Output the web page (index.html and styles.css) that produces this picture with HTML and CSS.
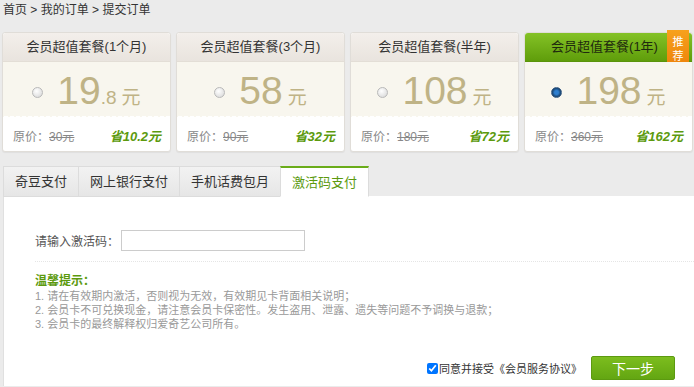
FILE: index.html
```html
<!DOCTYPE html>
<html lang="zh-CN">
<head>
  <meta charset="UTF-8">
  <title>提交订单</title>
  <link rel="stylesheet" href="styles.css">
</head>
<body>
  <div class="crumbs"><a>首页</a> &gt; <a>我的订单</a> &gt; <span>提交订单</span></div>

  <div class="plans">
    <div class="plan">
      <div class="plan-head">会员超值套餐(1个月)</div>
      <div class="plan-body">
        <span class="radio"></span>
        <span class="price">19</span><span class="price-small">.8</span><span class="unit">元</span>
      </div>
      <div class="plan-foot">
        <span class="orig">原价：<s>30元</s></span>
        <span class="save">省10.2元</span>
      </div>
    </div>
    <div class="plan">
      <div class="plan-head">会员超值套餐(3个月)</div>
      <div class="plan-body">
        <span class="radio"></span>
        <span class="price">58</span><span class="unit">元</span>
      </div>
      <div class="plan-foot">
        <span class="orig">原价：<s>90元</s></span>
        <span class="save">省32元</span>
      </div>
    </div>
    <div class="plan">
      <div class="plan-head">会员超值套餐(半年)</div>
      <div class="plan-body">
        <span class="radio"></span>
        <span class="price">108</span><span class="unit">元</span>
      </div>
      <div class="plan-foot">
        <span class="orig">原价：<s>180元</s></span>
        <span class="save">省72元</span>
      </div>
    </div>
    <div class="plan selected">
      <div class="plan-head">会员超值套餐(1年)</div>
      <div class="ribbon">推<br>荐</div>
      <div class="plan-body">
        <span class="radio on"></span>
        <span class="price">198</span><span class="unit">元</span>
      </div>
      <div class="plan-foot">
        <span class="orig">原价：<s>360元</s></span>
        <span class="save">省162元</span>
      </div>
    </div>
  </div>

  <div class="tabs">
    <div class="tab">奇豆支付</div>
    <div class="tab">网上银行支付</div>
    <div class="tab">手机话费包月</div>
    <div class="tab active">激活码支付</div>
  </div>

  <div class="panel">
    <div class="code-row">
      <label for="code">请输入激活码：</label>
      <input id="code" type="text">
    </div>
    <div class="tips">
      <h4>温馨提示：</h4>
      <p>1. 请在有效期内激活，否则视为无效，有效期见卡背面相关说明；</p>
      <p>2. 会员卡不可兑换现金，请注意会员卡保密性。发生盗用、泄露、遗失等问题不予调换与退款；</p>
      <p>3. 会员卡的最终解释权归爱奇艺公司所有。</p>
    </div>
    <div class="submit-row">
      <label class="agree"><input type="checkbox" checked>同意并接受《会员服务协议》</label>
      <button>下一步</button>
    </div>
  </div>
</body>
</html>
```

FILE: styles.css
```css
body {
  margin: 0;
  background: #ebebeb;
  font-family: "Liberation Sans", "Noto Sans CJK SC", sans-serif;
  font-size: 12px;
  color: #333;
  overflow: hidden;
  height: 387px;
}
.crumbs {
  height: 20px;
  line-height: 20px;
  padding-left: 3px;
  font-size: 12px;
  color: #333;
}
.crumbs a, .crumbs span {
  color: #333;
}
.plans {
  display: flex;
  gap: 5px;
  padding: 12px 0 0 2px;
}
.plan {
  position: relative;
  width: 167px;
  border: 1px solid #e0ddd8;
  border-radius: 3px;
  background: #fff;
  box-shadow: 0 1px 1px rgba(0, 0, 0, 0.05);
}
.plan-head {
  height: 28px;
  line-height: 28px;
  text-align: center;
  font-size: 13px;
  color: #333;
  border-radius: 3px 3px 0 0;
  background: linear-gradient(#f3efeb, #e9e4de);
  border-bottom: 1px solid #e3ded6;
}
.plan-body {
  position: relative;
  height: 57px;
  display: flex;
  align-items: baseline;
  justify-content: center;
  background: #f8f6ee;
}
.plan-body::after {
  content: "";
  position: absolute;
  left: 0;
  right: 0;
  bottom: 0;
  height: 5px;
  background: radial-gradient(circle at 3px 5px, #fff 3px, transparent 3.5px);
  background-size: 6px 5px;
}
.radio {
  display: inline-block;
  width: 9px;
  height: 9px;
  border-radius: 50%;
  border: 1px solid #b9b9b9;
  background: radial-gradient(circle at 40% 35%, #fff, #d4d4d4);
  margin-right: 14px;
  align-self: center;
  margin-top: 3px;
}
.radio.on {
  border-color: #3b5f86;
  background: radial-gradient(circle at 50% 50%, #2e7fd0 30%, #16406b 70%);
}
.price {
  font-size: 39px;
  line-height: 57px;
  color: #bfb386;
}
.price-small {
  font-size: 19px;
  color: #bfb386;
}
.unit {
  font-size: 19px;
  color: #bfb386;
  margin-left: 5px;
}
.plan-foot {
  display: flex;
  justify-content: space-between;
  align-items: center;
  height: 32px;
  padding: 0 9px 0 10px;
  font-size: 12px;
}
.orig, .orig s {
  color: #888;
}
.save {
  color: #5c9a0e;
  font-weight: bold;
  font-style: italic;
  font-size: 13px;
}
.selected .plan-head {
  background: linear-gradient(#84c226, #5f9d0b);
  border-bottom-color: #5a940b;
  color: #1e2a0e;
  padding-right: 8px;
}
.ribbon {
  position: absolute;
  top: -3px;
  right: 3px;
  width: 22px;
  height: 41px;
  padding-top: 5px;
  box-sizing: border-box;
  background: linear-gradient(#f7a11c, #ec7f08);
  color: #fff;
  font-size: 11px;
  line-height: 14px;
  text-align: center;
  clip-path: polygon(0 0, 100% 0, 100% 100%, 50% 84%, 0 100%);
}
.tabs {
  display: flex;
  margin: 14px 0 0 3px;
  height: 30px;
}
.tab {
  height: 29px;
  line-height: 29px;
  padding: 0 11px;
  font-size: 13px;
  color: #333;
  background: linear-gradient(#f2f2f2, #e6e6e6);
  border: 1px solid #dcdcdc;
  border-right: none;
}
.tab.active {
  height: 28px;
  background: #fff;
  color: #5c9a0e;
  border-top: 2px solid #6aac1a;
  border-bottom: 1px solid #fff;
  border-right: 1px solid #dcdcdc;
}
.panel {
  margin-left: 3px;
  background: #fff;
  border-left: 1px solid #e0e0e0;
  padding: 34px 0 0 31px;
  height: 156px;
}
.code-row {
  display: flex;
  align-items: center;
  padding-bottom: 10px;
  border-bottom: 1px dotted #e5e5e5;
}
.code-row label {
  font-size: 12px;
  color: #555;
  width: 86px;
}
.code-row input {
  width: 182px;
  height: 19px;
  border: 1px solid #ccc;
  padding: 0;
  margin: 0;
}
.tips {
  margin-top: 11px;
}
.tips h4 {
  margin: 0;
  font-size: 12px;
  line-height: 16px;
  color: #5c9a0e;
  font-weight: bold;
}
.tips p {
  margin: 0;
  font-size: 11px;
  line-height: 14px;
  color: #999;
}
.submit-row {
  display: flex;
  justify-content: flex-end;
  align-items: center;
  gap: 9px;
  margin-top: 25px;
  padding-right: 19px;
}
.agree {
  display: flex;
  align-items: center;
  font-size: 11px;
  color: #333;
}
.agree input {
  margin: 0 1px 0 0;
  width: 11px;
  height: 11px;
}
button {
  width: 84px;
  height: 24px;
  border: 1px solid #5c9a10;
  border-radius: 2px;
  background: linear-gradient(#7cbd1e, #63a612);
  color: #fff;
  font-size: 14px;
  font-family: inherit;
  cursor: pointer;
}
```
